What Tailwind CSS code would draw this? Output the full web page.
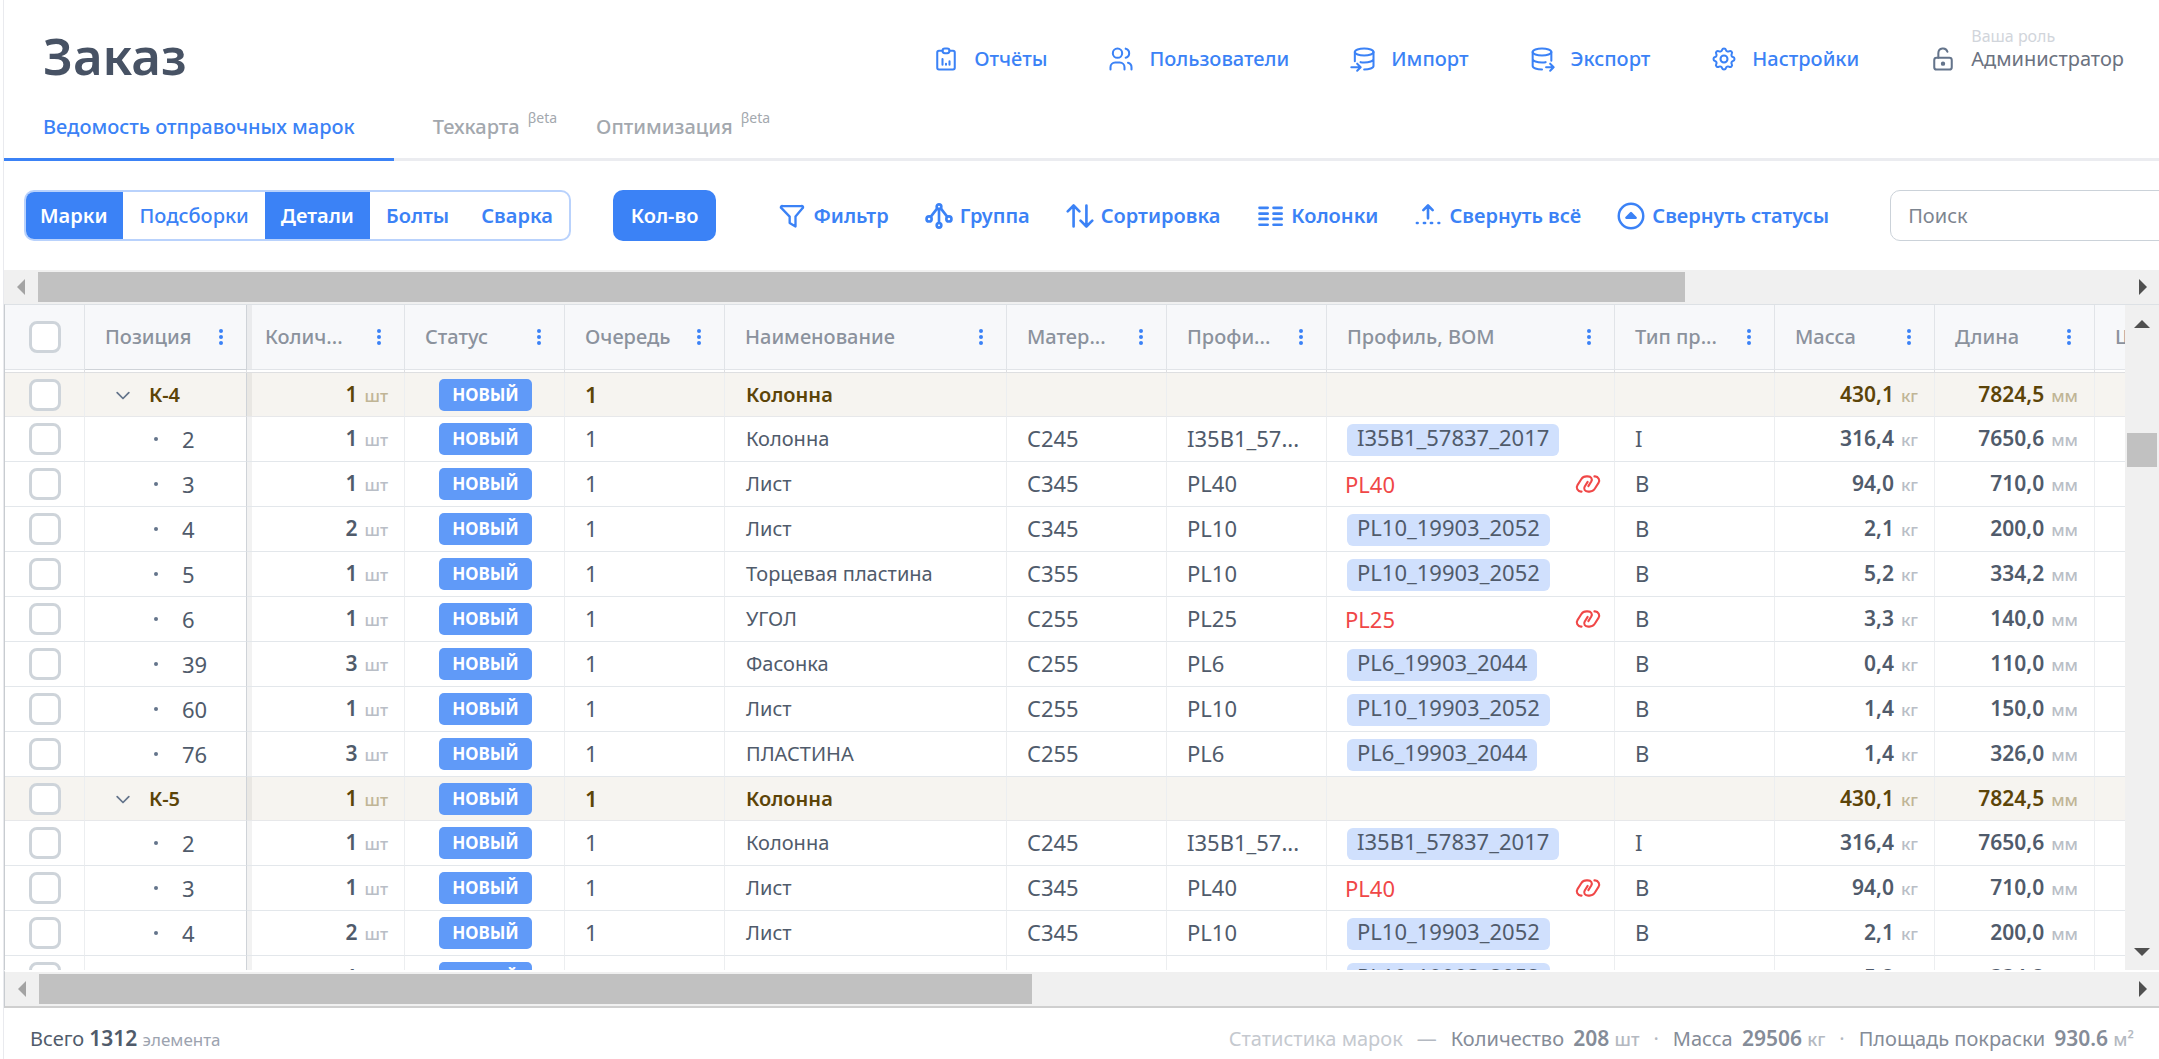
<!DOCTYPE html>
<html lang="ru">
<head>
<meta charset="utf-8">
<meta name="viewport" content="width=device-width, initial-scale=1">
<title>Заказ</title>
<script src="https://cdn.jsdelivr.net/npm/@tailwindcss/browser@4"></script>
</head>
<body class="bg-white">
<div class="ml-[3px] flex h-screen flex-col overflow-hidden border-l border-[#e9eaee] font-['Noto_Sans',sans-serif] text-xl text-[#505b6b]">

  <header class="flex h-[100px] shrink-0 items-start justify-between pl-[39px] pr-[35px]">
    <h1 class="mt-5 text-[51px] leading-[70px] font-semibold text-[#475264]">Заказ</h1>
    <nav class="mt-[27px] flex items-end gap-[60px] font-medium text-[#3b82f6]">
      <a href="#" class="flex h-7 items-center gap-[14px]">
        <svg class="size-7" viewBox="0 0 24 24" fill="none" stroke="currentColor" stroke-width="1.75" stroke-linecap="round" stroke-linejoin="round"><path d="M9 5H6a1.500 1.500 0 0 0-1.500 1.500v13A1.500 1.500 0 0 0 6 21h12a1.500 1.500 0 0 0 1.500-1.500v-13A1.500 1.500 0 0 0 18 5h-3"/><rect x="9" y="3" width="6" height="4" rx="2"/><path d="M9 17v-5M12 17v-1M15 17v-3"/></svg>
        <span>Отчёты</span></a>
      <a href="#" class="flex h-7 items-center gap-[14px]">
        <svg class="size-7" viewBox="0 0 24 24" fill="none" stroke="currentColor" stroke-width="1.75" stroke-linecap="round" stroke-linejoin="round"><circle cx="9" cy="7" r="4"/><path d="M3 21v-2a4 4 0 0 1 4-4h4a4 4 0 0 1 4 4v2M16 3.130a4 4 0 0 1 0 7.750M21 21v-2a4 4 0 0 0-3-3.850"/></svg>
        <span>Пользователи</span></a>
      <a href="#" class="flex h-7 items-center gap-[14px]">
        <svg class="size-7" viewBox="0 0 24 24" fill="none" stroke="currentColor" stroke-width="1.750" stroke-linecap="round" stroke-linejoin="round"><ellipse cx="13" cy="6" rx="8" ry="3"/><path d="M5 6v8M21 6v12c0 1.660-3.580 3-8 3M21 12c0 1.660-3.580 3-8 3-1.100 0-2.200-.1-3.100-.3M2 19h7.500M7 16l3 3-3 3"/></svg>
        <span>Импорт</span></a>
      <a href="#" class="flex h-7 items-center gap-[14px]">
        <svg class="size-7" viewBox="0 0 24 24" fill="none" stroke="currentColor" stroke-width="1.750" stroke-linecap="round" stroke-linejoin="round"><ellipse cx="12" cy="6" rx="8" ry="3"/><path d="M4 6v6c0 1.660 3.580 3 8 3 1.100 0 2.200-.1 3.100-.3M20 6v7.500M4 12v6c0 1.660 3.580 3 8 3M15.500 19H22M19 16l3 3-3 3"/></svg>
        <span>Экспорт</span></a>
      <a href="#" class="flex h-7 items-center gap-[14px]">
        <svg class="size-7" viewBox="0 0 24 24" fill="none" stroke="currentColor" stroke-width="1.750" stroke-linecap="round" stroke-linejoin="round"><path d="M10.325 4.317c.426-1.756 2.924-1.756 3.350 0a1.724 1.724 0 0 0 2.573 1.066c1.543-.94 3.310.826 2.370 2.370a1.724 1.724 0 0 0 1.065 2.572c1.756.426 1.756 2.924 0 3.350a1.724 1.724 0 0 0-1.066 2.573c.94 1.543-.826 3.310-2.370 2.370a1.724 1.724 0 0 0-2.572 1.065c-.426 1.756-2.924 1.756-3.350 0a1.724 1.724 0 0 0-2.573-1.066c-1.543.94-3.310-.826-2.370-2.370a1.724 1.724 0 0 0-1.065-2.572c-1.756-.426-1.756-2.924 0-3.350a1.724 1.724 0 0 0 1.066-2.573c-.94-1.543.826-3.310 2.370-2.370 1 .608 2.296.07 2.572-1.065z"/><circle cx="12" cy="12" r="3"/></svg>
        <span>Настройки</span></a>
      <a href="#" class="ml-[10px] flex items-end gap-[14px] font-normal text-[#64748b]">
        <svg class="size-7" viewBox="0 0 24 24" fill="none" stroke="currentColor" stroke-width="1.750" stroke-linecap="round" stroke-linejoin="round"><rect x="4.500" y="11" width="15" height="10" rx="2"/><circle cx="12" cy="16" r="1"/><path d="M8 11V7a4 4 0 0 1 7.800-1.200"/></svg>
        <span class="flex flex-col"><span class="text-base leading-[18px] text-[#d1d5db]">Ваша роль</span><span class="leading-7 text-[#6b7280]">Администратор</span></span></a>
    </nav>
  </header>

  <nav class="flex h-[61px] shrink-0 border-b-3 border-[#ebecf0] leading-[54px] font-medium text-[#a3a8ae]">
    <a href="#" class="-mb-[3px] border-b-3 border-[#3b82f6] px-[39px] text-[#3b82f6]">Ведомость отправочных марок</a>
    <a href="#" class="flex gap-2 pl-[39px]">Техкарта<span class="text-sm leading-9 font-normal">βeta</span></a>
    <a href="#" class="flex gap-2 pl-[39px]">Оптимизация<span class="text-sm leading-9 font-normal">βeta</span></a>
  </nav>

  <div class="flex h-[109px] shrink-0 items-center overflow-hidden pl-5 font-semibold whitespace-nowrap text-[#3b82f6]">
    <div class="flex h-[51px] shrink-0 overflow-hidden rounded-[10px] border-2 border-[#b9d2fc]">
      <button class="-my-[2px] -ml-[2px] bg-[#3b82f6] px-4 text-white">Марки</button>
      <button class="px-4 font-medium">Подсборки</button>
      <button class="-my-[2px] bg-[#3b82f6] px-4 text-white">Детали</button>
      <button class="px-4">Болты</button>
      <button class="px-4">Сварка</button>
    </div>
    <button class="ml-[42px] h-[51px] shrink-0 rounded-[10px] bg-[#3b82f6] px-[18px] text-white">Кол-во</button>
    <div class="ml-[62px] flex shrink-0 gap-9">
      <button class="flex items-center gap-[7px]">
        <svg class="size-7" viewBox="0 0 24 24" fill="none" stroke="currentColor" stroke-width="2" stroke-linecap="round" stroke-linejoin="round"><path d="M4 3.500h16a1 1 0 0 1 .8 2L15 12.500V21l-5-3v-5.500L3.200 5.500a1 1 0 0 1 .8-2z"/></svg>Фильтр</button>
      <button class="flex items-center gap-[7px]">
        <svg class="size-7" viewBox="0 0 24 24" fill="none" stroke="currentColor" stroke-width="2.250" stroke-linecap="round" stroke-linejoin="round"><circle cx="12" cy="4" r="2"/><circle cx="3.500" cy="14.500" r="2.200"/><circle cx="20.500" cy="14.500" r="2.200"/><circle cx="12" cy="20" r="2"/><path d="M12 6v12M10.500 5.500L5 12.500M13.500 5.500L19 12.500"/></svg>Группа</button>
      <button class="flex items-center gap-[7px]">
        <svg class="size-7" viewBox="0 0 24 24" fill="none" stroke="currentColor" stroke-width="2.250" stroke-linecap="round" stroke-linejoin="round"><path d="M6.500 21V3M1.500 8l5-5 5 5M17.500 3v18M12.500 16l5 5 5-5"/></svg>Сортировка</button>
      <button class="flex items-center gap-[7px]">
        <svg class="size-7" viewBox="0 0 24 24" fill="none" stroke="currentColor" stroke-width="2.250" stroke-linecap="round" stroke-linejoin="round"><path d="M3 5h7M3 10h7M3 14.500h7M3 19.500h7M15 5h7M15 10h7M15 14.500h7M15 19.500h7"/></svg>Колонки</button>
      <button class="flex items-center gap-[7px]">
        <svg class="size-7" viewBox="0 0 24 24" fill="none" stroke="currentColor" stroke-width="2.250" stroke-linecap="round" stroke-linejoin="round"><path d="M12 14V3.500M8 7l4-4 4 4M2.500 18h.6M8.500 18h1M14.500 18h1M21 18h.6"/></svg>Свернуть всё</button>
      <button class="flex items-center gap-[7px]">
        <svg class="size-7" viewBox="0 0 24 24" fill="none" stroke="currentColor" stroke-width="2.100" stroke-linejoin="round"><circle cx="12" cy="12" r="10.500"/><path d="M8 13.500h8l-4-4z" fill="currentColor"/></svg>Свернуть статусы</button>
    </div>
    <label class="ml-[61px] shrink-0"><span class="sr-only">Поиск</span><input type="search" placeholder="Поиск" class="h-[51px] w-[400px] rounded-[10px] border border-[#cbd2d9] px-[17px] font-normal placeholder:text-[#7d8590]"></label>
  </div>

  <div class="flex h-[34px] shrink-0 items-center bg-[#f0f0f0]">
    <svg class="h-4 w-[34px]" viewBox="0 0 34 16"><path d="M21 0v16l-8-8z" fill="#a3a3a3"/></svg>
    <div class="h-[30px] min-w-0 flex-1"><div class="h-full w-[78.9%] bg-[#c1c1c1]"></div></div>
    <svg class="h-4 w-[34px]" viewBox="0 0 34 16"><path d="M14 0v16l8-8z" fill="#505050"/></svg>
  </div>

  <main class="flex min-h-0 flex-1 border-t border-l border-t-[#dde1e5] border-l-[#c8ccd0]">
    <div class="min-w-0 flex-1 overflow-hidden">
      <table class="w-[2249px] table-fixed border-separate border-spacing-0 text-left">
        <colgroup><col class="w-[80px]"><col class="w-[162px]"><col class="w-[158px]"><col class="w-[160px]"><col class="w-[160px]"><col class="w-[282px]"><col class="w-[160px]"><col class="w-[160px]"><col class="w-[288px]"><col class="w-[160px]"><col class="w-[160px]"><col class="w-[160px]"><col class="w-[159px]"></colgroup>
        <thead><tr id="head"></tr></thead>
        <tbody id="rows"></tbody>
      </table>
    </div>
    <div class="flex w-[34px] flex-col items-center bg-[#f0f0f0]">
      <svg class="h-[34px] w-4" viewBox="0 0 16 34"><path d="M0 23h16l-8-8z" fill="#505050"/></svg>
      <div class="min-h-0 w-[30px] flex-1 pt-[94px]"><div class="h-[34px] bg-[#c1c1c1]"></div></div>
      <svg class="h-[34px] w-4" viewBox="0 0 16 34"><path d="M0 12h16l-8 8z" fill="#505050"/></svg>
    </div>
  </main>

  <div class="flex h-[38px] shrink-0 items-center border-t-2 border-b-2 border-l border-t-white border-b-[#cfcfcf] border-l-[#c8ccd0] bg-[#f0f0f0]">
    <svg class="h-4 w-[34px]" viewBox="0 0 34 16"><path d="M21 0v16l-8-8z" fill="#a3a3a3"/></svg>
    <div class="h-[30px] min-w-0 flex-1"><div class="h-full w-[47.6%] bg-[#c1c1c1]"></div></div>
    <svg class="h-4 w-[34px]" viewBox="0 0 34 16"><path d="M14 0v16l8-8z" fill="#505050"/></svg>
  </div>

  <footer class="flex h-[51px] shrink-0 items-center justify-between pt-[11px] pr-[25px] pl-[26px] whitespace-nowrap">
    <p>Всего <b class="text-[21px] font-semibold">1312</b> <span class="text-[17px] text-[#9ca3af]">элемента</span></p>
    <div class="flex items-baseline gap-[14px] text-[#858c98]">
      <span class="text-[#c5c9cf]">Статистика марок</span><span class="text-[#b4b9c1]">—</span>
      <span>Количество <b class="ml-1 text-[21px] font-semibold">208</b> <span class="text-[18px] font-medium text-[#b4b9c1]">шт</span></span><span class="text-[#b4b9c1]">·</span>
      <span>Масса <b class="ml-1 text-[21px] font-semibold">29506</b> <span class="text-[18px] font-medium text-[#b4b9c1]">кг</span></span><span class="text-[#b4b9c1]">·</span>
      <span>Площадь покраски <b class="ml-1 text-[21px] font-semibold">930.6</b> <span class="text-[18px] font-medium text-[#b4b9c1]">м²</span></span>
    </div>
  </footer>
</div>

<script>
const box = label => `<input type="checkbox" aria-label="${label}" class="mx-auto block size-8 appearance-none rounded-lg border-3 border-[#ced4da] bg-white">`;
const titles = ['Позиция','Колич...','Статус','Очередь','Наименование','Матер...','Профи...','Профиль, ВОМ','Тип пр...','Масса','Длина','Ширина'];
const edge = i => i === 0 ? 'border-[#cfd3d8]' : 'border-[#e1e4e8]';
const pinned = '<span class="absolute inset-y-0 left-0 w-[5px] bg-black/5"></span>';

document.getElementById('head').innerHTML =
  `<th class="h-[65px] border-r border-b border-[#e1e4e8] bg-[#f7f8fa] p-0">${box('Выбрать всё')}</th>` +
  titles.map((t, i) => `<th class="relative h-[65px] border-r border-b ${edge(i)} bg-[#f7f8fa] p-0 pr-[17px] ${i === 1 ? 'pl-[18px]' : 'pl-5'} font-medium text-[#8b929d]">${i === 1 ? pinned : ''}<span class="flex items-center justify-between whitespace-nowrap">${t}<button aria-label="Меню столбца" class="flex w-4 justify-center text-[#3b82f6]"><svg class="h-4 w-1" viewBox="0 0 4 16" fill="currentColor"><circle cx="2" cy="2" r="2"/><circle cx="2" cy="8" r="2"/><circle cx="2" cy="14" r="2"/></svg></button></span></th>`).join('');

// position, quantity, name, material, profile, BOM profile, missing link, type, mass, length
const parts = [
  ['2','1','Колонна','C245','I35B1_57...','I35B1_57837_2017',0,'I','316,4','7650,6'],
  ['3','1','Лист','C345','PL40','PL40',1,'B','94,0','710,0'],
  ['4','2','Лист','C345','PL10','PL10_19903_2052',0,'B','2,1','200,0'],
  ['5','1','Торцевая пластина','C355','PL10','PL10_19903_2052',0,'B','5,2','334,2'],
  ['6','1','УГОЛ','C255','PL25','PL25',1,'B','3,3','140,0'],
  ['39','3','Фасонка','C255','PL6','PL6_19903_2044',0,'B','0,4','110,0'],
  ['60','1','Лист','C255','PL10','PL10_19903_2052',0,'B','1,4','150,0'],
  ['76','3','ПЛАСТИНА','C255','PL6','PL6_19903_2044',0,'B','1,4','326,0']
];
const badge = '<span class="mx-auto flex h-8 w-[93px] items-center justify-center rounded-[5px] bg-[#609af8] text-[17px] font-bold text-white">НОВЫЙ</span>';
const num = (v, u, g) => `<span class="flex items-baseline justify-end gap-[7px] leading-8"><b class="text-[21px] font-semibold">${v}</b><span class="text-[17px] font-medium ${g ? 'text-[#c0b596]' : 'text-[#b9bec6]'}">${u}</span></span>`;
const code = v => `<span class="text-[22px] leading-8">${v}</span>`;
const link = '<svg class="size-7" viewBox="0 0 24 24" fill="none" stroke="currentColor" stroke-width="1.800" stroke-linecap="round" stroke-linejoin="round"><path id="l" d="M6.500 18.500H6a3.600 3.600 0 0 1-3-5.600l3.200-5A5.500 5.500 0 0 1 11 5.500h.8c3 0 4.200 2.200 3 4.300l-2.500 4"/><path d="M17.500 5.500h.5a3.600 3.600 0 0 1 3 5.600l-3.200 5A5.500 5.500 0 0 1 13 18.500h-.8c-3 0-4.200-2.200-3-4.300l2.500-4"/></svg>'.replace(' id="l"', '');
const bom = p => p[6]
  ? `<span class="-ml-[2px] mr-3 flex items-center justify-between leading-8 text-[#f04747]">${code(p[5])}${link}</span>`
  : `<span class="inline-flex h-8 rounded-md bg-[#d0e0fd] px-[10px] align-middle text-[22px] leading-[27px]">${p[5]}</span>`;

const pad = i => [2, 10, 11].includes(i) ? 'pr-4' : i === 3 ? 'pl-[2px]' : i === 5 ? 'pl-[21px]' : i > 3 ? 'pl-5' : '';
const cell = (html, i, group) =>
  `<td class="relative ${group ? 'h-11 border-b border-b-[#e7e8ea] bg-[#f6f4f0]' : 'h-[45px] border-b border-b-[#e3e7eb]'} border-r ${i === 1 ? 'border-r-[#cfd3d8]' : 'border-r-[#eceef0]'} p-0 leading-8 whitespace-nowrap ${pad(i)}">${i === 2 ? pinned : ''}${html}</td>`;

const group = name => '<tr class="font-semibold text-[#5c4408]">' + [
  box('Выбрать ' + name),
  `<span class="flex items-center pl-6"><button aria-label="Свернуть" class="text-[#64748b]"><svg class="size-[28px]" viewBox="0 0 24 24" fill="none" stroke="currentColor" stroke-width="1.500" stroke-linecap="round" stroke-linejoin="round"><path d="M7 10l5 5 5-5"/></svg></button><span class="ml-3">${name}</span></span>`,
  num('1', 'шт', 1), badge, code('1'), 'Колонна', '', '', '', '', num('430,1', 'кг', 1), num('7824,5', 'мм', 1), ''
].map((h, i) => cell(h, i, true)).join('') + '</tr>';

const part = p => '<tr>' + [
  box('Выбрать ' + p[0]),
  `<span class="flex items-center"><span class="ml-[69px] size-1 rounded-full bg-[#64748b]"></span><span class="ml-6 text-[22px]">${p[0]}</span></span>`,
  num(p[1], 'шт'), badge, code('1'), p[2], code(p[3]), code(p[4]), bom(p), code(p[7]), num(p[8], 'кг'), num(p[9], 'мм'), ''
].map((h, i) => cell(h, i, false)).join('') + '</tr>';

const spacer = '<tr>' + Array.from({ length: 13 }, (_, i) => `<td class="h-[3px] border-r border-b border-[#dedfe1] p-0"></td>`).join('') + '</tr>';
document.getElementById('rows').innerHTML = spacer + group('К-4') + parts.map(part).join('') + group('К-5') + parts.slice(0, 4).map(part).join('');
</script>
</body>
</html>
